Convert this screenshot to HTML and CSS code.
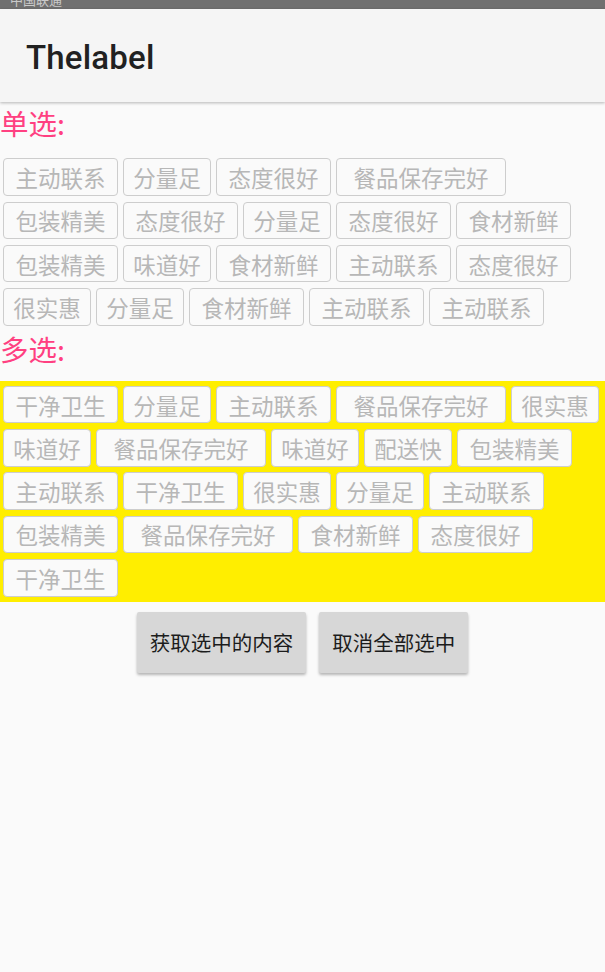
FILE: index.html
```html
<!DOCTYPE html>
<html lang="zh-CN">
<head>
<meta charset="utf-8">
<title>Thelabel</title>
<link rel="stylesheet" href="styles.css">
</head>
<body>
<div class="statusbar"><span class="carrier">中国联通</span></div>
<header class="toolbar"><h1 class="title">Thelabel</h1></header>

<div class="section-title">单选:</div>
<div class="tags tags-single">
  <span class="tag len4">主动联系</span>
  <span class="tag len3">分量足</span>
  <span class="tag len4">态度很好</span>
  <span class="tag len6">餐品保存完好</span>
  <span class="tag len4">包装精美</span>
  <span class="tag len4">态度很好</span>
  <span class="tag len3">分量足</span>
  <span class="tag len4">态度很好</span>
  <span class="tag len4">食材新鲜</span>
  <span class="tag len4">包装精美</span>
  <span class="tag len3">味道好</span>
  <span class="tag len4">食材新鲜</span>
  <span class="tag len4">主动联系</span>
  <span class="tag len4">态度很好</span>
  <span class="tag len3">很实惠</span>
  <span class="tag len3">分量足</span>
  <span class="tag len4">食材新鲜</span>
  <span class="tag len4">主动联系</span>
  <span class="tag len4">主动联系</span>
</div>

<div class="section-title">多选:</div>
<div class="tags tags-multi">
  <span class="tag len4">干净卫生</span>
  <span class="tag len3">分量足</span>
  <span class="tag len4">主动联系</span>
  <span class="tag len6">餐品保存完好</span>
  <span class="tag len3">很实惠</span>
  <span class="tag len3">味道好</span>
  <span class="tag len6">餐品保存完好</span>
  <span class="tag len3">味道好</span>
  <span class="tag len3">配送快</span>
  <span class="tag len4">包装精美</span>
  <span class="tag len4">主动联系</span>
  <span class="tag len4">干净卫生</span>
  <span class="tag len3">很实惠</span>
  <span class="tag len3">分量足</span>
  <span class="tag len4">主动联系</span>
  <span class="tag len4">包装精美</span>
  <span class="tag len6">餐品保存完好</span>
  <span class="tag len4">食材新鲜</span>
  <span class="tag len4">态度很好</span>
  <span class="tag len4">干净卫生</span>
</div>

<div class="actions">
  <button class="btn">获取选中的内容</button>
  <button class="btn">取消全部选中</button>
</div>
</body>
</html>
```

FILE: styles.css
```css
html, body {
  margin: 0;
  padding: 0;
}
body {
  background: #fafafa;
  font-family: "Noto Sans CJK SC", "Noto Sans", sans-serif;
  width: 605px;
  height: 972px;
  overflow: hidden;
}
.statusbar {
  height: 9px;
  background: #707070;
  overflow: hidden;
  padding-left: 10px;
}
.carrier {
  display: block;
  margin-top: -8px;
  font-size: 13px;
  line-height: 16px;
  color: #c9c9c9;
}
.toolbar {
  box-sizing: border-box;
  height: 92.5px;
  background: #f5f5f5;
  box-shadow: 0 1px 3px rgba(0, 0, 0, 0.28);
  display: flex;
  align-items: center;
  padding: 4px 0 0 26px;
  position: relative;
}
.title {
  margin: 0;
  font-family: Roboto, "Liberation Sans", sans-serif;
  font-weight: 500;
  font-size: 33px;
  color: #212121;
  letter-spacing: 0.2px;
}
.section-title {
  font-size: 28.5px;
  line-height: 42.3px;
  padding-bottom: 10.2px;
  color: #ff4081;
}
.tags {
  display: flex;
  flex-wrap: wrap;
  gap: 5.8px 5px;
  padding: 0 3px;
}
.tags-single {
  padding-top: 4.3px;
  padding-bottom: 2.4px;
}
.tags-multi {
  background: #ffee00;
  padding-top: 5.3px;
  padding-bottom: 5.3px;
}
.tag {
  box-sizing: border-box;
  height: 37.5px;
  display: flex;
  align-items: center;
  justify-content: center;
  border: 1px solid #cdcdcd;
  border-radius: 4px;
  background: #fafafa;
  color: #b7b7b7;
  font-size: 22.5px;
  white-space: nowrap;
}
.len3 { width: 88px; }
.len4 { width: 115px; }
.len6 { width: 170px; }
.actions {
  display: flex;
  justify-content: center;
  gap: 13px;
  padding-top: 10px;
}
.btn {
  height: 61px;
  padding: 0 13px;
  border: none;
  border-radius: 2px;
  background: #d7d7d7;
  box-shadow: 0 2px 3px rgba(0, 0, 0, 0.28);
  font-family: "Noto Sans CJK SC", sans-serif;
  font-size: 20.5px;
  font-weight: 400;
  color: #1c1c1c;
}
```
